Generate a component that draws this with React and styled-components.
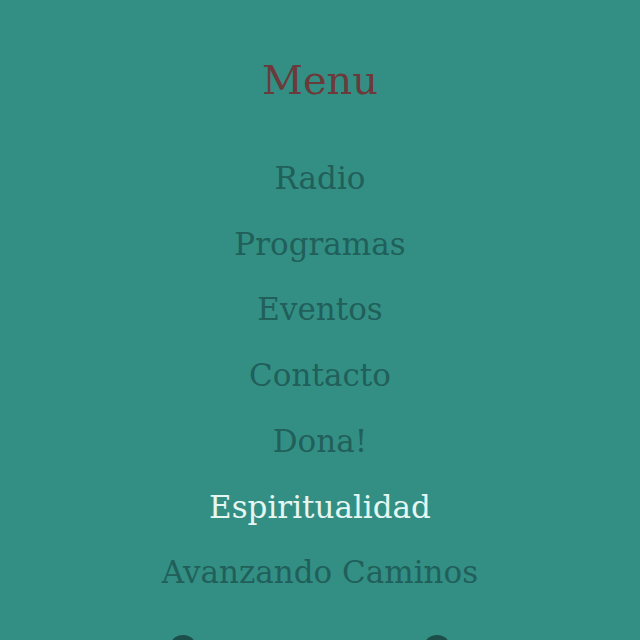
import React from "react";
import styled, { createGlobalStyle } from "styled-components";

const Global = createGlobalStyle`
  html, body { margin: 0; padding: 0; background: #338f84; }
  body { overflow: hidden; }
`;

const Page = styled.nav`
  width: 640px;
  height: 640px;
  background: #338f84;
  display: flex;
  flex-direction: column;
  align-items: center;
  font-family: "DejaVu Serif", "Liberation Serif", serif;
  overflow: hidden;
`;

const Title = styled.h1`
  margin: 54px 0 0;
  font-weight: normal;
  font-size: 40px;
  line-height: 52px;
  color: #6b3a3b;
`;

const List = styled.ul`
  list-style: none;
  margin: 40px 0 0;
  padding: 0;
  display: flex;
  flex-direction: column;
  align-items: center;
`;

const Item = styled.li`
  font-size: 31px;
  line-height: 65.7px;
  color: ${(p) => (p.$active ? "#e6f6f1" : "#215f5a")};
  white-space: nowrap;
`;

const Icons = styled.div`
  display: flex;
  gap: 226px;
  margin: 29px 20px 0 0;
`;

const Icon = styled.span`
  width: 28px;
  height: 28px;
  border-radius: 50%;
  background: #1d4f4a;
  display: block;
`;

const items = [
  "Radio",
  "Programas",
  "Eventos",
  "Contacto",
  "Dona!",
  "Espiritualidad",
  "Avanzando Caminos",
];

export default function App() {
  return (
    <Page>
      <Global />
      <Title>Menu</Title>
      <List>
        {items.map((t) => (
          <Item key={t} $active={t === "Espiritualidad"}>
            {t}
          </Item>
        ))}
      </List>
      <Icons>
        <Icon />
        <Icon />
      </Icons>
    </Page>
  );
}
